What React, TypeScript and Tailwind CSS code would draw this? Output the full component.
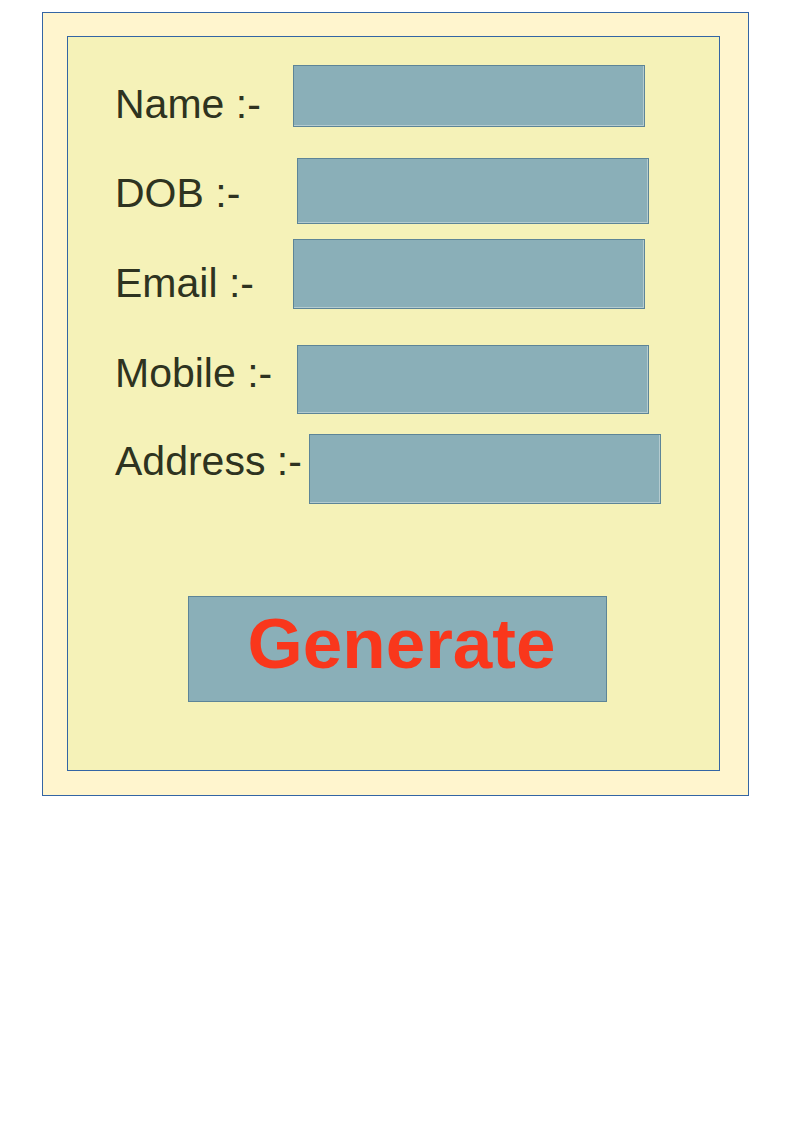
import React from 'react';

type Field = {
  label:     string;
  rowTop:    string; // margin above the row
  labelTop:  string; // label offset inside the row
  labelW:    string;
  inputH:    string;
};

const FIELDS: Field[] = [
  { label: 'Name :-',    rowTop: 'mt-[28px]', labelTop: 'mt-[19px]', labelW: 'w-[178px]', inputH: 'h-[62px]' },
  { label: 'DOB :-',     rowTop: 'mt-[31px]', labelTop: 'mt-[15px]', labelW: 'w-[182px]', inputH: 'h-[66px]' },
  { label: 'Email :-',   rowTop: 'mt-[15px]', labelTop: 'mt-[24px]', labelW: 'w-[178px]', inputH: 'h-[70px]' },
  { label: 'Mobile :-',  rowTop: 'mt-[36px]', labelTop: 'mt-[8px]',  labelW: 'w-[182px]', inputH: 'h-[69px]' },
  { label: 'Address :-', rowTop: 'mt-[20px]', labelTop: 'mt-[7px]',  labelW: 'w-[194px]', inputH: 'h-[70px]' },
];

function FormRow({ f }: { f: Field }) {
  return (
    <div className={`flex items-start ${f.rowTop}`}>
      <span className={`${f.labelW} ${f.labelTop} shrink-0 whitespace-nowrap text-[41px] leading-none text-[#2e3320]`}>
        {f.label}
      </span>
      <input
        type="text"
        className={`${f.inputH} w-[352px] shrink-0 border border-[#5d8597] bg-[#8aafb8] shadow-[inset_-1px_-1px_0_#b4cbcf] outline-none`}
      />
    </div>
  );
}

export default function App() {
  return (
    <div className="min-h-[1123px] bg-white pt-[12px] pl-[42px] font-['Liberation_Sans',Arial,sans-serif]">
      <div className="w-[707px] h-[784px] border border-[#3465a4] bg-[#fff5ce] pt-[23px] pl-[24px]">
        <div className="w-[653px] h-[735px] border border-solid border-[#3465a4] bg-[#f5f2b8] pl-[47px]">
          {FIELDS.map(f => <FormRow key={f.label} f={f} />)}

          {/* ─── Generate button ─── */}
          <button
            type="button"
            className="mt-[92px] ml-[73px] flex h-[106px] w-[419px] items-start justify-center border border-[#5d8597] bg-[#8aafb8] pt-[11px] pl-[8px]"
          >
            <span className="text-[71px] font-bold leading-none text-[#f9371c]">Generate</span>
          </button>
        </div>
      </div>
    </div>
  );
}
